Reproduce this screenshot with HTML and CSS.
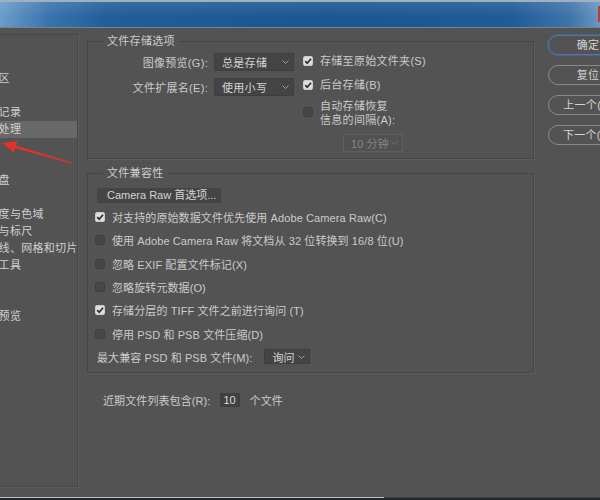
FILE: index.html
```html
<!DOCTYPE html>
<html lang="zh-CN">
<head>
<meta charset="utf-8">
<title>首选项</title>
<link rel="stylesheet" href="styles.css">
</head>
<body>
<div class="window">
  <div class="titlebar"><span class="close"></span></div>
  <div class="main">
    <ul class="nav">
      <li>常规</li>
      <li>界面</li>
      <li>工作区</li>
      <li>工具</li>
      <li>历史记录</li>
      <li class="sel">文件处理</li>
      <li>导出</li>
      <li>性能</li>
      <li>暂存盘</li>
      <li>光标</li>
      <li>透明度与色域</li>
      <li>单位与标尺</li>
      <li>参考线、网格和切片</li>
      <li>增效工具</li>
      <li>文字</li>
      <li>3D</li>
      <li>技术预览</li>
    </ul>

    <div class="content">
      <fieldset class="fs fs1">
        <legend>文件存储选项</legend>
        <div class="fs1-body">
          <div class="pairs">
            <span class="lbl">图像预览(G):</span>
            <div class="select w80"><span>总是存储</span><svg class="chev" viewBox="0 0 7 4" width="7" height="4"><polyline points="0.5,0.5 3.5,3.5 6.5,0.5"/></svg></div>
            <span class="lbl">文件扩展名(E):</span>
            <div class="select w80"><span>使用小写</span><svg class="chev" viewBox="0 0 7 4" width="7" height="4"><polyline points="0.5,0.5 3.5,3.5 6.5,0.5"/></svg></div>
          </div>
          <div class="checks">
            <div class="chk r1"><i class="box on"><svg viewBox="0 0 10 10" width="10" height="10"><polyline points="2.2,5.2 4.2,7.2 8,2.8"/></svg></i><span class="wide">存储至原始文件夹(S)</span></div>
            <div class="chk r2"><i class="box on"><svg viewBox="0 0 10 10" width="10" height="10"><polyline points="2.2,5.2 4.2,7.2 8,2.8"/></svg></i><span class="wide">后台存储(B)</span></div>
            <div class="chk r3"><i class="box"></i><span class="wide">自动存储恢复<br>信息的间隔(A):</span></div>
            <div class="select disabled"><span>10 分钟</span><svg class="chev" viewBox="0 0 7 4" width="7" height="4"><polyline points="0.5,0.5 3.5,3.5 6.5,0.5"/></svg></div>
          </div>
        </div>
      </fieldset>

      <fieldset class="fs fs2">
        <legend>文件兼容性</legend>
        <div class="fs2-body">
          <div class="btn-flat">Camera Raw 首选项...</div>
          <div class="row chk"><i class="box on"><svg viewBox="0 0 10 10" width="10" height="10"><polyline points="2.2,5.2 4.2,7.2 8,2.8"/></svg></i><span>对支持的原始数据文件优先使用 Adobe Camera Raw(C)</span></div>
          <div class="row chk"><i class="box"></i><span>使用 Adobe Camera Raw 将文档从 32 位转换到 16/8 位(U)</span></div>
          <div class="row chk"><i class="box"></i><span>忽略 EXIF 配置文件标记(X)</span></div>
          <div class="row chk"><i class="box"></i><span>忽略旋转元数据(O)</span></div>
          <div class="row chk"><i class="box on"><svg viewBox="0 0 10 10" width="10" height="10"><polyline points="2.2,5.2 4.2,7.2 8,2.8"/></svg></i><span>存储分层的 TIFF 文件之前进行询问 (T)</span></div>
          <div class="row chk"><i class="box"></i><span>停用 PSD 和 PSB 文件压缩(D)</span></div>
          <div class="row max">
            <span>最大兼容 PSD 和 PSB 文件(M):</span>
            <div class="select w46"><span>询问</span><svg class="chev" viewBox="0 0 7 4" width="7" height="4"><polyline points="0.5,0.5 3.5,3.5 6.5,0.5"/></svg></div>
          </div>
        </div>
      </fieldset>

      <div class="recent">
        <span>近期文件列表包含(R):</span>
        <span class="num">10</span>
        <span>个文件</span>
      </div>
    </div>

    <div class="buttons">
      <div class="btn default">确定</div>
      <div class="btn">复位</div>
      <div class="btn">上一个(P)</div>
      <div class="btn">下一个(N)</div>
    </div>
  </div>
  <div class="bottom-edge"></div>

  <svg class="arrow" viewBox="0 0 80 170" width="80" height="170">
    <polygon points="2,143 17.1,141.1 15.9,145.5 72.2,162.4 71.8,163.6 15.1,148.3 13.9,152.7"/>
  </svg>
</div>
</body>
</html>
```

FILE: styles.css
```css
* { box-sizing: border-box; }

html, body {
  margin: 0;
  padding: 0;
  width: 600px;
  height: 500px;
  overflow: hidden;
  background: #535353;
}

.window {
  position: relative;
  width: 600px;
  height: 500px;
  display: flex;
  flex-direction: column;
  font-family: "Liberation Sans", "Noto Sans CJK SC", sans-serif;
  font-size: 11px;
  color: #cbcbcb;
  letter-spacing: 0.1px;
}

.wide { letter-spacing: 0.3px; }

.titlebar {
  position: relative;
  height: 28px;
  flex: none;
  border-top: 2px solid #9fb0c0;
  border-bottom: 1px solid #77838f;
  background:
    linear-gradient(to bottom, rgba(255,255,255,0.10), rgba(255,255,255,0) 60%),
    linear-gradient(to right, #6a9ccb 0%, #3a74ad 8%, #215d98 18%, #1c5692 55%, #1f5b97 85%, #3f74aa 95%, #6b96c2 100%);
}

.close {
  position: absolute;
  right: 0;
  top: 4px;
  width: 2px;
  height: 16px;
  background: #b0403a;
}

.main {
  flex: 1;
  display: flex;
  align-items: flex-start;
  min-height: 0;
}

.nav {
  list-style: none;
  margin: 6px 0 0 -40px;
  padding: 1px 0 0 15px;
  width: 118px;
  height: 453px;
  flex: none;
  border: 1px solid #474747;
  box-shadow: 1px 1px 0 #5d5d5d;
  white-space: nowrap;
  overflow: hidden;
  color: #d0d0d0;
  letter-spacing: 0.3px;
}

.nav li {
  height: 17px;
  line-height: 17px;
  margin-left: -15px;
  padding-left: 15px;
}

.nav li.sel {
  background: #686868;
}

.content {
  margin: 6px 0 0 9px;
  width: 447px;
  flex: none;
}

.fs {
  margin: 0;
  padding: 0;
  min-width: 0;
  border: 1px solid #464646;
  box-shadow: 1px 1px 0 #5e5e5e;
}

.fs legend {
  margin-left: 15px;
  padding: 0 4px;
  line-height: 14px;
  color: #cdcdcd;
  letter-spacing: 0.3px;
}

.fs1-body {
  display: flex;
  align-items: flex-start;
  padding: 5px 0 6px 0;
}

.pairs {
  display: grid;
  grid-template-columns: 120px 80px;
  column-gap: 6px;
  row-gap: 7px;
  align-items: center;
  letter-spacing: 0.3px;
}

.lbl {
  text-align: right;
  white-space: nowrap;
}

.select {
  height: 18px;
  display: flex;
  align-items: center;
  justify-content: space-between;
  padding: 0 4px 0 7px;
  background: #444444;
  border: 1px solid #3e3e3e;
  color: #d4d4d4;
  white-space: nowrap;
}

.select .chev {
  fill: none;
  stroke: #a0a0a0;
  stroke-width: 1;
}

.w80 { width: 80px; }
.w46 { width: 46px; height: 15px; padding-left: 8px; }

.select.disabled {
  width: 60px;
  margin: 7.5px 0 0 40px;
  background: #515151;
  border-color: #5f5f5f;
  color: #858585;
}

.select.disabled .chev { stroke: #767676; }

.checks {
  margin-left: 9px;
  display: flex;
  flex-direction: column;
}

.chk {
  display: flex;
  align-items: center;
  gap: 7px;
  white-space: nowrap;
}

.checks .r1, .checks .r2 { height: 16px; line-height: 16px; }
.checks .r2 { margin-top: 7.5px; }
.checks .r3 {
  margin-top: 6px;
  align-items: flex-start;
  line-height: 14px;
  height: 28px;
}
.checks .r3 .box { margin-top: 8.5px; }

.box {
  flex: none;
  width: 10px;
  height: 10px;
  border-radius: 2px;
  background: #474747;
  border: 1px solid #404040;
  display: block;
  position: relative;
}

.box svg {
  position: absolute;
  left: -1px;
  top: -1px;
  fill: none;
  stroke: #2e2e2e;
  stroke-width: 1.7;
}

.box.on {
  background: #dedede;
  border-color: #cbcbcb;
}

.fs2 { margin-top: 7px; }

.fs2-body {
  padding: 8px 0 3px 9px;
}

.btn-flat {
  width: 124px;
  height: 15px;
  line-height: 15px;
  padding-left: 10px;
  background: #454545;
  color: #d4d4d4;
  letter-spacing: 0;
  margin-bottom: 2.3px;
  white-space: nowrap;
}

.row {
  height: 23.33px;
}

.row.chk { margin-left: -2px; }

.row.max {
  display: flex;
  align-items: center;
  gap: 11px;
  white-space: nowrap;
}

.recent {
  display: flex;
  align-items: center;
  margin-top: 20px;
  padding-left: 16px;
  height: 14px;
  white-space: nowrap;
}

.recent .num {
  width: 20px;
  height: 14px;
  line-height: 14px;
  margin: 0 10px 0 9px;
  text-align: center;
  background: #404040;
  color: #dadada;
  letter-spacing: 0;
}

.buttons {
  margin: 7px 0 0 14px;
  flex: none;
  display: flex;
  flex-direction: column;
  gap: 10px;
}

.btn {
  width: 80px;
  height: 20px;
  line-height: 18px;
  text-align: center;
  border: 1px solid #8a8a8a;
  border-radius: 10px;
  color: #d4d4d4;
  white-space: nowrap;
  letter-spacing: 0.3px;
}

.btn.default {
  border-color: #4677b8;
  box-shadow: 0 0 0 1px rgba(70, 120, 185, 0.45);
}

.bottom-edge {
  flex: none;
  height: 3px;
  border-top: 1px solid;
  border-image: linear-gradient(to right, #c4c4c4 0 64%, #3c3f42 64% 100%) 1;
  background: #24282c;
}

.arrow {
  position: absolute;
  left: 0;
  top: 0;
  fill: #e3312c;
}
```
